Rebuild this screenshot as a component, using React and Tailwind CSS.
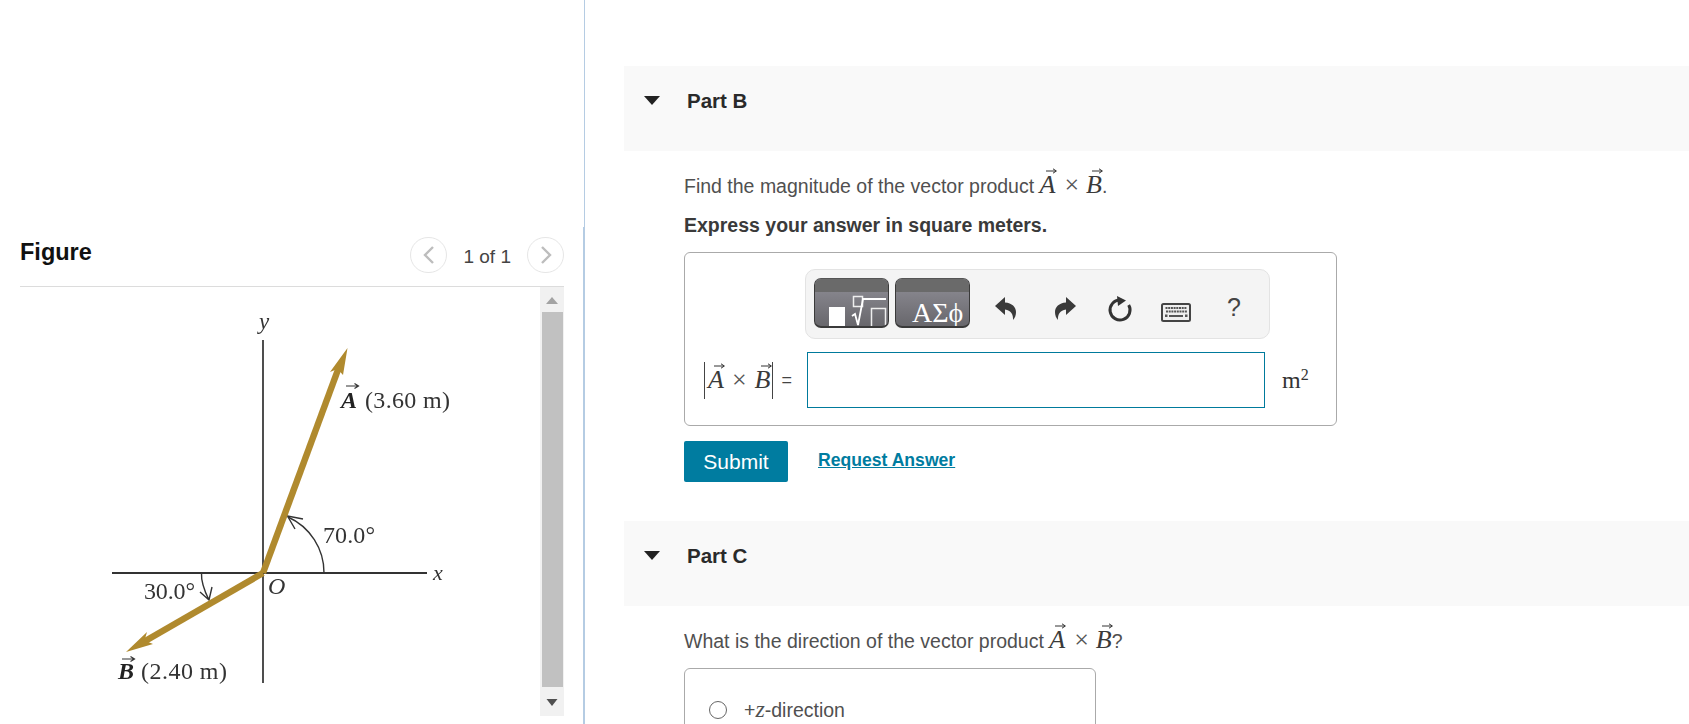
const sans = "font-['Liberation_Sans',Arial,sans-serif]";
const serif = "font-['Liberation_Serif','Times_New_Roman',serif]";

// letter with a vector arrow on top
const Vec = ({ c }) => (
  <span className={`relative inline-block italic ${serif} text-[26px] leading-none text-[#3a3a3a]`}>
    {c}
    <svg className="absolute -top-[4px] left-[6px]" width="11" height="6" viewBox="0 0 11 6">
      <path d="M0 3H10M7 .8L10.400 3L7 5.200" fill="none" stroke="#333" strokeWidth="1" />
    </svg>
  </span>
);

const Cross = ({ wide }) => (
  <span className={`${serif} ${wide ? "mx-[8px]" : "ml-[9px] mr-[7px]"} text-[26px] leading-none text-[#555]`}>×</span>
);

const Caret = () => (
  <svg width="16" height="9" viewBox="0 0 16 9" className="mr-[27px] shrink-0">
    <path d="M0 0H16L8 9Z" fill="#222" />
  </svg>
);

const PartBand = ({ title }) => (
  <div className="flex h-[85px] items-start bg-[#f9f9f9] pl-[20px] pt-[22px]">
    <div className="flex h-[24px] items-center">
      <Caret />
      <span className="mt-[2px] text-[20.5px] font-bold leading-[24px] text-[#2a2a2a]">{title}</span>
    </div>
  </div>
);

const NavButton = ({ dir }) => (
  <div className="flex h-[36px] w-[37px] items-center justify-center rounded-full border border-[#e6e6e6] bg-white">
    <svg width="12" height="20" viewBox="0 0 12 20">
      <path
        d={dir === "left" ? "M10 2L2 10L10 18" : "M2 2L10 10L2 18"}
        fill="none"
        stroke="#bdbdbd"
        strokeWidth="2.4"
      />
    </svg>
  </div>
);

// the figure is a drawing, viewBox uses page coordinates
const FigureDrawing = () => (
  <svg width="520" height="437" viewBox="20 287 520 437" className={`block shrink-0 blur-[0.45px] ${serif}`}>
    <path d="M263 340V683" stroke="#222" strokeWidth="1.6" />
    <path d="M112 573H427" stroke="#333" strokeWidth="1.8" />
    <path d="M324 573A61 61 0 0 0 288 517" fill="none" stroke="#333" strokeWidth="1.4" />
    <path d="M303 519L287.500 516L295 529" fill="none" stroke="#333" strokeWidth="1.4" />
    <path d="M201.500 573C201 582 205 592 209 600M200 592L209 600L212 587" fill="none" stroke="#333" strokeWidth="1.4" />

    <path d="M263 573L339 367" stroke="#b08a2e" strokeWidth="6.5" />
    <path d="M347.500 348L330 372L337.500 369L343 375Z" fill="#b08a2e" />
    <path d="M263 573L140 644" stroke="#b08a2e" strokeWidth="6.5" />
    <path d="M126 652L147 632L144.500 640.500L153 644Z" fill="#b08a2e" />

    <g fill="#333" fontSize="24">
      <text x="259" y="329" fontStyle="italic" fontSize="23">y</text>
      <text x="433" y="580" fontStyle="italic" fontSize="22">x</text>
      <text x="268" y="594" fontStyle="italic">O</text>
      <text x="323" y="543" textLength="52">70.0°</text>
      <text x="144" y="599" textLength="51">30.0°</text>
      <text x="341" y="408" fontWeight="bold" fontStyle="italic" fill="#222">A</text>
      <text x="365" y="408" textLength="85">(3.60 m)</text>
      <text x="118" y="679" fontWeight="bold" fontStyle="italic" fill="#222">B</text>
      <text x="141" y="679" textLength="86">(2.40 m)</text>
    </g>
    <path d="M346 386H358M354.500 383.500L358.500 386L354.500 388.500" fill="none" stroke="#333" strokeWidth="1.2" />
    <path d="M122 659H134M130.500 656.500L134.500 659L130.500 661.500" fill="none" stroke="#333" strokeWidth="1.2" />
  </svg>
);

const Scrollbar = () => (
  <div className="flex h-[429px] w-[24px] shrink-0 flex-col items-center bg-[#f1f1f1]">
    <svg width="14" height="25" viewBox="0 0 14 25" className="shrink-0">
      <path d="M1 17L7 10L13 17Z" fill="#a3a3a3" />
    </svg>
    <div className="h-[375px] w-[21px] shrink-0 bg-[#c1c1c1]" />
    <svg width="14" height="29" viewBox="0 0 14 29" className="shrink-0">
      <path d="M1.500 12H12.500L7 19Z" fill="#505050" />
    </svg>
  </div>
);

const TemplateButton = ({ children }) => (
  <div className="h-[50px] w-[75px] overflow-hidden rounded-[7px] border border-b-2 border-[#3a3a3a] border-t-[#555] bg-[linear-gradient(#908f97,#68676c)]">
    <div className="h-[13px] bg-[#6a6a6a]" />
    {children}
  </div>
);

const Undo = ({ flip }) => (
  <svg width="21" height="23" viewBox="0 0 21 23">
    <path
      transform={flip ? "translate(21 0) scale(-1 1)" : undefined}
      d="M0 9L10 0V5.500C17 6 21 10 21 15C21 18 20 21 18 23C18.500 18 16 13 10 12.500V18Z"
      fill="#3a3a3a"
    />
  </svg>
);

const Refresh = () => (
  <svg width="26" height="30" viewBox="0 0 26 30">
    <path d="M13 6A10 10 0 1 0 21.700 11" fill="none" stroke="#333" strokeWidth="3" />
    <path d="M10 2L19 6.500L11 12Z" fill="#333" />
  </svg>
);

const Keyboard = () => {
  const cols = [0, 1, 2, 3, 4, 5, 6, 7];
  return (
    <svg width="30" height="19" viewBox="0 0 30 19">
      <rect x="1" y="1" width="28" height="17" rx="1.500" fill="#efefef" stroke="#444" strokeWidth="2" />
      {cols.map((i) => (
        <rect key={i} x={4.500 + i * 2.7} y="4" width="2" height="2" fill="#555" />
      ))}
      {cols.map((i) => (
        <rect key={i} x={5 + i * 2.7} y="7.500" width="2" height="2" fill="#555" />
      ))}
      <rect x="4" y="11.500" width="2.500" height="2.500" fill="#555" />
      <rect x="24" y="11.500" width="2.500" height="2.500" fill="#555" />
      <rect x="8" y="12" width="14" height="2" fill="#555" />
    </svg>
  );
};

const Toolbar = () => (
  <div className="ml-[120px] flex h-[70px] w-[465px] items-start rounded-[10px] border border-[#e3e3e3] bg-[#f4f4f4] pl-[8px] pt-[8px]">
    <TemplateButton>
      <svg width="73" height="36" viewBox="0 0 73 36" className="block">
        <rect x="14" y="15" width="16" height="21" fill="#fff" />
        <rect x="38.500" y="4.500" width="9" height="10" fill="none" stroke="#eee" strokeWidth="1.500" />
        <path d="M37 24L40 22L43 33L48 7H71" fill="none" stroke="#fff" strokeWidth="1.800" />
        <rect x="56.500" y="16.500" width="14" height="21" fill="none" stroke="#eee" strokeWidth="1.500" />
      </svg>
    </TemplateButton>
    <div className="ml-[6px]">
      <TemplateButton>
        <div className={`pl-[16px] pt-[6px] text-[28px] leading-[30px] text-white ${serif}`}>ΑΣϕ</div>
      </TemplateButton>
    </div>
    <div className="ml-[25px] mt-[19px] flex"><Undo /></div>
    <div className="ml-[39px] mt-[19px] flex"><Undo flip /></div>
    <div className="ml-[31px] mt-[16px] flex"><Refresh /></div>
    <div className="ml-[28px] mt-[25px] flex"><Keyboard /></div>
    <div className="ml-[36px] mt-[17px] text-[25px] leading-none text-[#444]">?</div>
  </div>
);

const AnswerBox = () => (
  <div className="mt-[13px] h-[174px] w-[653px] rounded-[6px] border border-[#aaa] pt-[16px]">
    <Toolbar />
    <div className="mt-[13px] flex items-center pl-[19px]">
      <div className="flex w-[103px] items-center">
        <span className="h-[37px] w-px shrink-0 bg-[#444]" />
        <span className="ml-[3px] flex items-baseline">
          <Vec c="A" />
          <Cross wide />
          <Vec c="B" />
        </span>
        <span className="ml-[2px] h-[37px] w-px shrink-0 bg-[#444]" />
        <span className="ml-[8px] text-[18px] text-[#444]">=</span>
      </div>
      <div className="h-[56px] w-[458px] shrink-0 border border-[#007a9c] bg-white" />
      <div className={`ml-[17px] text-[24px] leading-none text-[#333] ${serif}`}>
        m<sup className="text-[16px]">2</sup>
      </div>
    </div>
  </div>
);

export default function App() {
  return (
    <div className={`flex h-[724px] w-full overflow-hidden bg-white ${sans}`}>
      <div className="flex w-[583px] shrink-0 flex-col">
        <div className="ml-[20px] mr-[19px] mt-[234px] flex h-[53px] items-start justify-between border-b border-[#dcdcdc]">
          <span className="mt-[1px] text-[23.500px] font-bold leading-[34px] text-[#111]">Figure</span>
          <div className="mt-[3px] flex items-start">
            <NavButton dir="left" />
            <span className="mx-[16px] mt-[2px] text-[19px] leading-[36px] text-[#444]">1 of 1</span>
            <NavButton dir="right" />
          </div>
        </div>
        <div className="flex min-h-0 flex-1 pl-[20px]">
          <FigureDrawing />
          <Scrollbar />
        </div>
      </div>
      <div className="flex w-[2px] shrink-0 flex-col items-end">
        <div className="h-[227px] w-px bg-[#b5cce3]" />
        <div className="w-[2px] flex-1 bg-[#b5cce3]" />
      </div>

      <div className="min-w-0 flex-1 pl-[39px] pt-[66px]">
        <PartBand title="Part B" />
        <div className="pl-[60px]">
          <div className="mt-[21px] flex h-[28px] items-baseline text-[19.500px] leading-[28px] text-[#505050]">
            Find the magnitude of the vector product&nbsp;
            <Vec c="A" />
            <Cross />
            <Vec c="B" />.
          </div>
          <div className="mt-[11px] h-[28px] text-[19.500px] font-bold leading-[28px] text-[#3a3a3a]">
            Express your answer in square meters.
          </div>
          <AnswerBox />
          <div className="mt-[15px] flex items-center">
            <button className="h-[41px] w-[104px] rounded-[2px] bg-[#007ca0] text-[21px] text-white">Submit</button>
            <a className="ml-[30px] -mt-[2px] text-[17.600px] font-bold text-[#007ca0] underline">Request Answer</a>
          </div>
        </div>
        <div className="mt-[39px]">
          <PartBand title="Part C" />
        </div>
        <div className="pl-[60px]">
          <div className="mt-[21px] flex h-[28px] items-baseline text-[19.500px] leading-[28px] text-[#505050]">
            What is the direction of the vector product&nbsp;
            <Vec c="A" />
            <Cross />
            <Vec c="B" />?
          </div>
          <div className="mt-[13px] h-[100px] w-[412px] rounded-[6px] border border-[#aaa] pl-[24px] pt-[27px]">
            <div className="flex h-[26px] items-center">
              <span className="mt-[1px] h-[18px] w-[18px] rounded-full border-[1.5px] border-[#666]" />
              <span className="ml-[17px] text-[19.500px] text-[#505050]">
                +<span className={`italic ${serif} text-[24px]`}>z</span>-direction
              </span>
            </div>
          </div>
        </div>
      </div>
    </div>
  );
}
